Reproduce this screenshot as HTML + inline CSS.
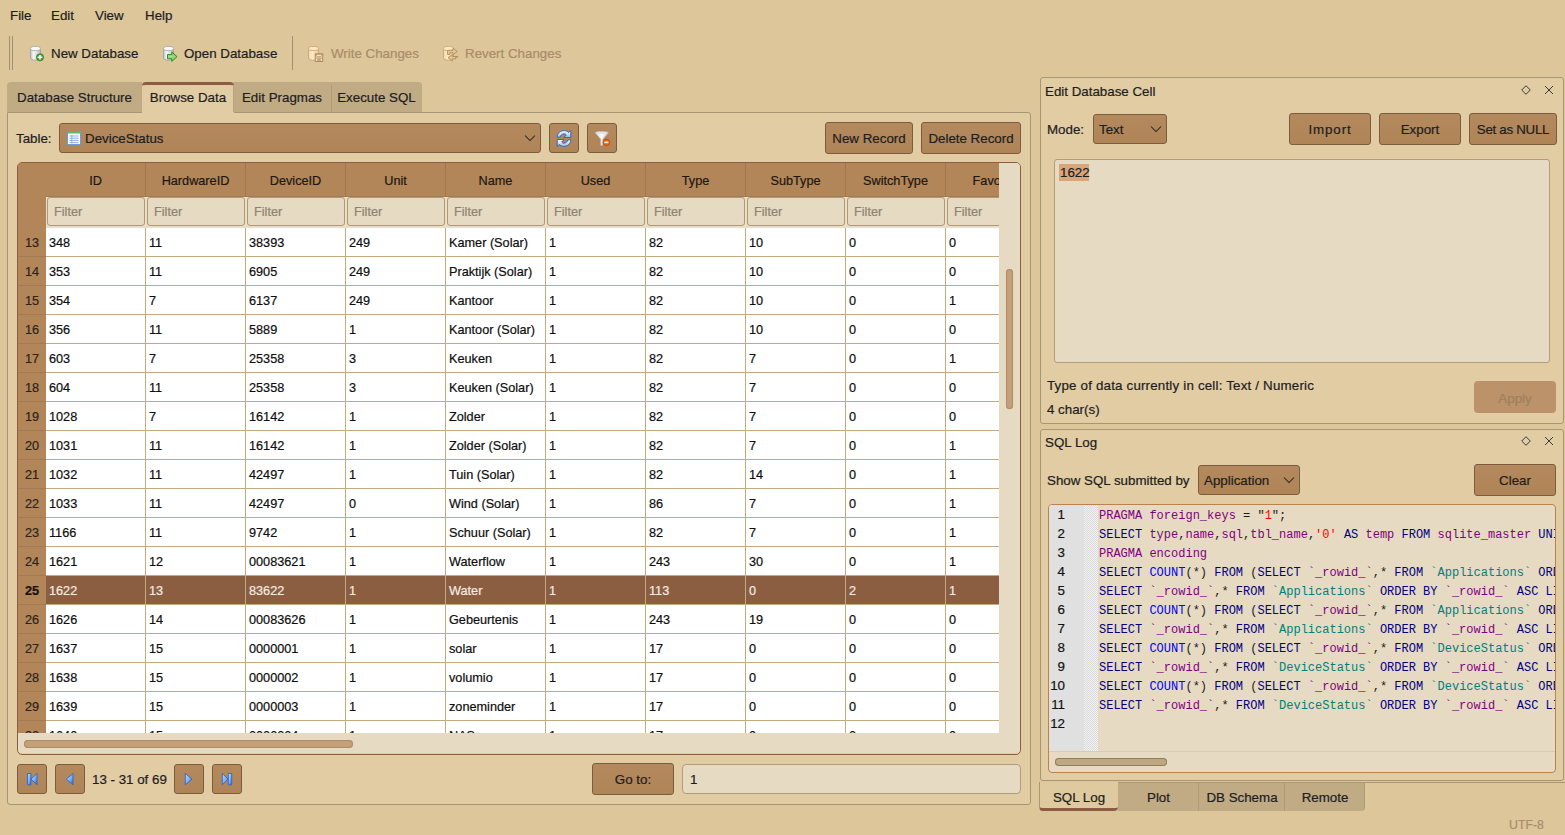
<!DOCTYPE html>
<html><head><meta charset="utf-8"><style>
html,body{margin:0;padding:0}
body{-webkit-text-stroke:0.2px currentColor;width:1565px;height:835px;overflow:hidden;position:relative;background:#dcc69a;font-family:"Liberation Sans",sans-serif;font-size:13.33px;color:#1d1d1d}
.t,.hc,.ft,.rh,.cell,.ln{position:absolute;white-space:nowrap;line-height:16px}
.dis{color:#a98c69}
.ic{position:absolute;line-height:0}
.ic svg{display:block}
.pane{position:absolute;background:#e1cca4;border:1px solid #a79674;border-radius:0 3px 3px 3px;box-sizing:border-box}
.tab{position:absolute;background:#c0ab85;box-sizing:border-box;border-radius:4px 4px 0 0}
.tabsel{position:absolute;background:#e1cca4;box-sizing:border-box;border-top:3px solid #8d5b44;border-radius:4px 4px 0 0}
.btn{position:absolute;box-sizing:border-box;background:linear-gradient(#b4895d,#af8558);border:1px solid #7c5b3e;border-radius:3px}
.frame{position:absolute;box-sizing:border-box;border:1px solid #8f5c45;border-radius:5px}
.hc{text-align:center;font-size:12.7px;color:#1c1712}
.filt{position:absolute;box-sizing:border-box;background:#e6dac2;border:1px solid #b09a74;border-radius:3px}
.ft{font-size:12.7px;color:#8c8272}
.rh{left:0;width:28px;text-align:center;font-size:12.7px;color:#2a231c}
.rhs{font-weight:bold;color:#17110c}
.cell{font-size:12.7px;color:#0d0d0d}
.cs{color:#f4ece3}
.inp{position:absolute;box-sizing:border-box;background:#e6dac2;border:1px solid #b09d7b;border-radius:4px}
.dock{position:absolute;box-sizing:border-box;background:#e1cca4;border:1px solid #a79674;border-radius:3px}
.editor{position:absolute;box-sizing:border-box;background:#e6dac2;border:1px solid #bd8150;border-radius:4px}
.fold{background-color:#f2f2f2;background-image:linear-gradient(45deg,#dadada 25%,transparent 25%,transparent 75%,#dadada 75%),linear-gradient(45deg,#dadada 25%,transparent 25%,transparent 75%,#dadada 75%);background-size:2px 2px;background-position:0 0,1px 1px}
.ln{left:0;width:16px;text-align:right;font-size:13.33px;color:#111}
.code{-webkit-text-stroke:0;position:absolute;left:50px;font-family:"Liberation Mono",monospace;font-size:12px;line-height:16px;white-space:pre}
.btab{position:absolute;top:783px;height:28px;box-sizing:border-box;background:#c0ab85;border-right:1px solid #b09b76;border-radius:0 0 4px 4px}
.bsel{background:#dfc99f;border-bottom:3px solid #8d5b44;border-right:none;border-left:1px solid #a99674;top:782px;height:29px}
</style></head><body>
<div class="t" style="left:10px;top:8px;">File</div>
<div class="t" style="left:51px;top:8px;">Edit</div>
<div class="t" style="left:95px;top:8px;">View</div>
<div class="t" style="left:145px;top:8px;">Help</div>
<div style="position:absolute;left:9px;top:36px;width:1px;height:34px;background:#a39072"></div>
<div style="position:absolute;left:12px;top:36px;width:1px;height:34px;background:#a39072"></div>
<div style="position:absolute;left:292px;top:36px;width:1px;height:34px;background:#a39072"></div>
<div class="ic" style="left:29px;top:45px"><svg width="17" height="17" viewBox="0 0 17 17"><defs><linearGradient id="g1" x1="0" x2="1"><stop offset="0" stop-color="#c4c4c4"/><stop offset=".3" stop-color="#f4f4f4"/><stop offset=".7" stop-color="#d9d9d9"/><stop offset="1" stop-color="#b4b4b4"/></linearGradient></defs>
<path d="M1.5 3.5v9.5c0 1.3 2.3 2.2 5 2.2s5-.9 5-2.2V3.5" fill="url(#g1)" stroke="#a3a3a3" stroke-width=".9"/>
<ellipse cx="6.5" cy="3.5" rx="5" ry="2.1" fill="#fdfdfd" stroke="#a8a8a8" stroke-width=".9"/><circle cx="11" cy="12.3" r="3.6" fill="#4c9f36" stroke="#2f7c20" stroke-width=".7"/><path d="M11 10v4.6M8.7 12.3h4.6" stroke="#fff" stroke-width="1.5"/></svg></div>
<div class="t" style="left:51px;top:46px;">New Database</div>
<div class="ic" style="left:162px;top:45px"><svg width="17" height="17" viewBox="0 0 17 17"><defs><linearGradient id="g2" x1="0" x2="1"><stop offset="0" stop-color="#c4c4c4"/><stop offset=".3" stop-color="#f4f4f4"/><stop offset=".7" stop-color="#d9d9d9"/><stop offset="1" stop-color="#b4b4b4"/></linearGradient></defs>
<path d="M1.5 3.5v9.5c0 1.3 2.3 2.2 5 2.2s5-.9 5-2.2V3.5" fill="url(#g2)" stroke="#a3a3a3" stroke-width=".9"/>
<ellipse cx="6.5" cy="3.5" rx="5" ry="2.1" fill="#fdfdfd" stroke="#a8a8a8" stroke-width=".9"/><path d="M5.5 9.6h4.3V7l5.2 4.7-5.2 4.7v-2.6H5.5z" fill="#93d17a" stroke="#2a8f1b" stroke-width="1" stroke-linejoin="miter"/><path d="M6.5 11.2h4" stroke="#c5ebb5" stroke-width=".8"/></svg></div>
<div class="t" style="left:184px;top:46px;">Open Database</div>
<div class="ic" style="left:307px;top:45px"><svg width="17" height="17" viewBox="0 0 17 17"><defs><linearGradient id="g3" x1="0" x2="1"><stop offset="0" stop-color="#f3d6a8"/><stop offset=".4" stop-color="#ffe9c4"/><stop offset="1" stop-color="#e9c999"/></linearGradient></defs>
<path d="M1.5 3.5v9.5c0 1.3 2.3 2.2 5 2.2s5-.9 5-2.2V3.5" fill="url(#g3)" stroke="#c9a77a" stroke-width=".9"/>
<ellipse cx="6.5" cy="3.5" rx="5" ry="2.1" fill="#ffe7c2" stroke="#c9a77a" stroke-width=".9"/><rect x="8.3" y="8.8" width="7.4" height="7.6" fill="#ffe5bd" stroke="#a9875b" stroke-width="1"/><rect x="9.7" y="9.3" width="4.6" height="2.3" fill="#ffe5bd" stroke="#a9875b" stroke-width=".6"/><rect x="9.3" y="12.6" width="5.4" height="1" fill="#a9875b"/><rect x="10" y="14.4" width="4" height="1.2" fill="#a9875b"/></svg></div>
<div class="t dis" style="left:331px;top:46px;">Write Changes</div>
<div class="ic" style="left:442px;top:45px"><svg width="17" height="17" viewBox="0 0 17 17"><defs><linearGradient id="g4" x1="0" x2="1"><stop offset="0" stop-color="#f3d6a8"/><stop offset=".4" stop-color="#ffe9c4"/><stop offset="1" stop-color="#e9c999"/></linearGradient></defs>
<path d="M1.5 3.5v9.5c0 1.3 2.3 2.2 5 2.2s5-.9 5-2.2V3.5" fill="url(#g4)" stroke="#c9a77a" stroke-width=".9"/>
<ellipse cx="6.5" cy="3.5" rx="5" ry="2.1" fill="#ffe7c2" stroke="#c9a77a" stroke-width=".9"/><path d="M5.5 5.3h5.5V3.3l4.3 3.2-4.3 3.2V7.7H7.8v1.8H5.5z" fill="#e3c596" stroke="#a9875b" stroke-width=".8" stroke-linejoin="round"/><path d="M15.8 11.5h-5.5v-2l-4.3 3.2 4.3 3.2v-2h3.2v-1.6h2.3z" fill="#e3c596" stroke="#a9875b" stroke-width=".8" stroke-linejoin="round"/></svg></div>
<div class="t dis" style="left:465px;top:46px;">Revert Changes</div>
<div class="pane" style="left:7px;top:112px;width:1024px;height:693px"></div>
<div class="tab" style="left:7px;top:82px;width:135px;height:30px;border-radius:4px 0 0 0"></div>
<div class="t" style="left:7px;top:90px;width:135px;text-align:center">Database Structure</div>
<div class="tab" style="left:233px;top:82px;width:98px;height:30px;border-radius:0"></div>
<div class="t" style="left:233px;top:90px;width:98px;text-align:center">Edit Pragmas</div>
<div class="tab" style="left:331px;top:82px;width:91px;height:30px;border-radius:0 4px 0 0"></div>
<div class="t" style="left:331px;top:90px;width:91px;text-align:center">Execute SQL</div>
<div class="tabsel" style="left:142px;top:82px;width:92px;height:32px"></div>
<div style="position:absolute;left:331px;top:85px;width:1px;height:27px;background:#ad9a76"></div>
<div style="position:absolute;left:233px;top:85px;width:1px;height:27px;background:#b8a47f"></div>
<div class="t" style="left:142px;top:90px;width:92px;text-align:center">Browse Data</div>
<div class="t" style="left:16px;top:131px;">Table:</div>
<div class="btn" style="left:59px;top:123px;width:482px;height:30px;"></div>
<div class="ic" style="left:67px;top:131px"><svg width="15" height="15" viewBox="0 0 15 15"><rect x=".5" y=".5" width="13" height="13" fill="#f7fafe" stroke="#6d9ad8"/><rect x="1" y="1" width="12" height="1.5" fill="#62b85a"/><path d="M2.5 5h9M2.5 7.2h9M2.5 9.4h9M2.5 11.6h9" stroke="#8fb3e6" stroke-width="1"/><path d="M4.8 4v8.5" stroke="#8fb3e6" stroke-width="1"/></svg></div>
<div class="t" style="left:85px;top:131px;">DeviceStatus</div>
<div class="ic" style="left:524px;top:134px"><svg width="12" height="8" viewBox="0 0 12 8"><path d="M1 1.5l5 5 5-5" fill="none" stroke="#262626" stroke-width="1.05"/></svg></div>
<div class="btn" style="left:549px;top:123px;width:30px;height:30px;"></div>
<div class="ic" style="left:556px;top:130px"><svg width="16" height="17" viewBox="0 0 16 17"><defs><linearGradient id="rfg" x1="0" y1="0" x2="0" y2="1"><stop offset="0" stop-color="#eef6ff"/><stop offset=".5" stop-color="#cfe3fb"/><stop offset="1" stop-color="#8db9ec"/></linearGradient></defs><path d="M1.2 7.2C1.2 3.2 4.5.6 8.3.6c2 0 3.5.9 4.5 1.9L14.8.5v7H7.8l2.5-2.5c-.6-.8-1.3-1.2-2-1.2-2.1 0-3.9 1.5-4.1 3.4z" fill="url(#rfg)" stroke="#2d68bd" stroke-width="1" stroke-linejoin="round"/><path d="M14.8 9.8c0 4-3.3 6.6-7.1 6.6-2 0-3.5-.9-4.5-1.9l-2 2v-7h7l-2.5 2.5c.6.8 1.3 1.2 2 1.2 2.1 0 3.9-1.5 4.1-3.4z" fill="url(#rfg)" stroke="#2d68bd" stroke-width="1" stroke-linejoin="round"/></svg></div>
<div class="btn" style="left:587px;top:123px;width:30px;height:30px;"></div>
<div class="ic" style="left:594px;top:131px"><svg width="16" height="16" viewBox="0 0 16 16"><defs><linearGradient id="fng" x1="0" x2="1"><stop offset="0" stop-color="#dcdcdc"/><stop offset=".5" stop-color="#fbfbfb"/><stop offset="1" stop-color="#d0d0d0"/></linearGradient></defs><path d="M1.3 1.8C1.3.9 4.3.4 7.8.4s6.5.5 6.5 1.4L8.8 8.3v6H6.8v-6z" fill="url(#fng)" stroke="#bdbdbd" stroke-width=".8" stroke-linejoin="round"/><ellipse cx="7.8" cy="1.9" rx="5.2" ry=".9" fill="#e2e2e2"/><circle cx="12.4" cy="11.4" r="3.4" fill="#e0630f" stroke="#b94a06" stroke-width=".6"/><rect x="10.4" y="10.6" width="4" height="1.6" fill="#fff"/></svg></div>
<div class="btn" style="left:825px;top:122px;width:88px;height:32px;"></div>
<div class="t" style="left:825px;top:131px;width:88px;text-align:center">New Record</div>
<div class="btn" style="left:921px;top:122px;width:100px;height:32px;"></div>
<div class="t" style="left:921px;top:131px;width:100px;text-align:center">Delete Record</div>
<div class="frame" style="left:17px;top:162px;width:1004px;height:593px"></div>
<div style="position:absolute;left:18px;top:163px;width:981px;height:570px;overflow:hidden;border-radius:4px 0 0 0">
<div style="position:absolute;left:0px;top:0px;width:981px;height:34px;background:#b28659"></div>
<div style="position:absolute;left:28px;top:34px;width:953px;height:31px;background:#e9dec8"></div>
<div style="position:absolute;left:0px;top:0px;width:28px;height:570px;background:#b28659"></div>
<div style="position:absolute;left:28px;top:33px;width:953px;height:1px;background:#a57c52"></div>
<div class="hc" style="left:28px;top:10px;width:99px">ID</div>
<div style="position:absolute;left:127px;top:0px;width:1px;height:34px;background:#9f774f"></div>
<div class="filt" style="left:29px;top:34px;width:98px;height:29px"></div>
<div class="ft" style="left:36px;top:41px">Filter</div>
<div class="hc" style="left:128px;top:10px;width:99px">HardwareID</div>
<div style="position:absolute;left:227px;top:0px;width:1px;height:34px;background:#9f774f"></div>
<div class="filt" style="left:129px;top:34px;width:98px;height:29px"></div>
<div class="ft" style="left:136px;top:41px">Filter</div>
<div class="hc" style="left:228px;top:10px;width:99px">DeviceID</div>
<div style="position:absolute;left:327px;top:0px;width:1px;height:34px;background:#9f774f"></div>
<div class="filt" style="left:229px;top:34px;width:98px;height:29px"></div>
<div class="ft" style="left:236px;top:41px">Filter</div>
<div class="hc" style="left:328px;top:10px;width:99px">Unit</div>
<div style="position:absolute;left:427px;top:0px;width:1px;height:34px;background:#9f774f"></div>
<div class="filt" style="left:329px;top:34px;width:98px;height:29px"></div>
<div class="ft" style="left:336px;top:41px">Filter</div>
<div class="hc" style="left:428px;top:10px;width:99px">Name</div>
<div style="position:absolute;left:527px;top:0px;width:1px;height:34px;background:#9f774f"></div>
<div class="filt" style="left:429px;top:34px;width:98px;height:29px"></div>
<div class="ft" style="left:436px;top:41px">Filter</div>
<div class="hc" style="left:528px;top:10px;width:99px">Used</div>
<div style="position:absolute;left:627px;top:0px;width:1px;height:34px;background:#9f774f"></div>
<div class="filt" style="left:529px;top:34px;width:98px;height:29px"></div>
<div class="ft" style="left:536px;top:41px">Filter</div>
<div class="hc" style="left:628px;top:10px;width:99px">Type</div>
<div style="position:absolute;left:727px;top:0px;width:1px;height:34px;background:#9f774f"></div>
<div class="filt" style="left:629px;top:34px;width:98px;height:29px"></div>
<div class="ft" style="left:636px;top:41px">Filter</div>
<div class="hc" style="left:728px;top:10px;width:99px">SubType</div>
<div style="position:absolute;left:827px;top:0px;width:1px;height:34px;background:#9f774f"></div>
<div class="filt" style="left:729px;top:34px;width:98px;height:29px"></div>
<div class="ft" style="left:736px;top:41px">Filter</div>
<div class="hc" style="left:828px;top:10px;width:99px">SwitchType</div>
<div style="position:absolute;left:927px;top:0px;width:1px;height:34px;background:#9f774f"></div>
<div class="filt" style="left:829px;top:34px;width:98px;height:29px"></div>
<div class="ft" style="left:836px;top:41px">Filter</div>
<div class="hc" style="left:928px;top:10px;width:99px">Favorite</div>
<div style="position:absolute;left:1027px;top:0px;width:1px;height:34px;background:#9f774f"></div>
<div class="filt" style="left:929px;top:34px;width:98px;height:29px"></div>
<div class="ft" style="left:936px;top:41px">Filter</div>
<div style="position:absolute;left:28px;top:65px;width:953px;height:28px;background:#fff"></div>
<div style="position:absolute;left:28px;top:93px;width:953px;height:1px;background:#c4aa80"></div>
<div style="position:absolute;left:0px;top:93px;width:28px;height:1px;background:#a27b55"></div>
<div class="rh" style="top:72px">13</div>
<div class="cell" style="left:31px;top:72px">348</div>
<div class="cell" style="left:131px;top:72px">11</div>
<div class="cell" style="left:231px;top:72px">38393</div>
<div class="cell" style="left:331px;top:72px">249</div>
<div class="cell" style="left:431px;top:72px">Kamer (Solar)</div>
<div class="cell" style="left:531px;top:72px">1</div>
<div class="cell" style="left:631px;top:72px">82</div>
<div class="cell" style="left:731px;top:72px">10</div>
<div class="cell" style="left:831px;top:72px">0</div>
<div class="cell" style="left:931px;top:72px">0</div>
<div style="position:absolute;left:28px;top:94px;width:953px;height:28px;background:#fff"></div>
<div style="position:absolute;left:28px;top:122px;width:953px;height:1px;background:#c4aa80"></div>
<div style="position:absolute;left:0px;top:122px;width:28px;height:1px;background:#a27b55"></div>
<div class="rh" style="top:101px">14</div>
<div class="cell" style="left:31px;top:101px">353</div>
<div class="cell" style="left:131px;top:101px">11</div>
<div class="cell" style="left:231px;top:101px">6905</div>
<div class="cell" style="left:331px;top:101px">249</div>
<div class="cell" style="left:431px;top:101px">Praktijk (Solar)</div>
<div class="cell" style="left:531px;top:101px">1</div>
<div class="cell" style="left:631px;top:101px">82</div>
<div class="cell" style="left:731px;top:101px">10</div>
<div class="cell" style="left:831px;top:101px">0</div>
<div class="cell" style="left:931px;top:101px">0</div>
<div style="position:absolute;left:28px;top:123px;width:953px;height:28px;background:#fff"></div>
<div style="position:absolute;left:28px;top:151px;width:953px;height:1px;background:#c4aa80"></div>
<div style="position:absolute;left:0px;top:151px;width:28px;height:1px;background:#a27b55"></div>
<div class="rh" style="top:130px">15</div>
<div class="cell" style="left:31px;top:130px">354</div>
<div class="cell" style="left:131px;top:130px">7</div>
<div class="cell" style="left:231px;top:130px">6137</div>
<div class="cell" style="left:331px;top:130px">249</div>
<div class="cell" style="left:431px;top:130px">Kantoor</div>
<div class="cell" style="left:531px;top:130px">1</div>
<div class="cell" style="left:631px;top:130px">82</div>
<div class="cell" style="left:731px;top:130px">10</div>
<div class="cell" style="left:831px;top:130px">0</div>
<div class="cell" style="left:931px;top:130px">1</div>
<div style="position:absolute;left:28px;top:152px;width:953px;height:28px;background:#fff"></div>
<div style="position:absolute;left:28px;top:180px;width:953px;height:1px;background:#c4aa80"></div>
<div style="position:absolute;left:0px;top:180px;width:28px;height:1px;background:#a27b55"></div>
<div class="rh" style="top:159px">16</div>
<div class="cell" style="left:31px;top:159px">356</div>
<div class="cell" style="left:131px;top:159px">11</div>
<div class="cell" style="left:231px;top:159px">5889</div>
<div class="cell" style="left:331px;top:159px">1</div>
<div class="cell" style="left:431px;top:159px">Kantoor (Solar)</div>
<div class="cell" style="left:531px;top:159px">1</div>
<div class="cell" style="left:631px;top:159px">82</div>
<div class="cell" style="left:731px;top:159px">10</div>
<div class="cell" style="left:831px;top:159px">0</div>
<div class="cell" style="left:931px;top:159px">0</div>
<div style="position:absolute;left:28px;top:181px;width:953px;height:28px;background:#fff"></div>
<div style="position:absolute;left:28px;top:209px;width:953px;height:1px;background:#c4aa80"></div>
<div style="position:absolute;left:0px;top:209px;width:28px;height:1px;background:#a27b55"></div>
<div class="rh" style="top:188px">17</div>
<div class="cell" style="left:31px;top:188px">603</div>
<div class="cell" style="left:131px;top:188px">7</div>
<div class="cell" style="left:231px;top:188px">25358</div>
<div class="cell" style="left:331px;top:188px">3</div>
<div class="cell" style="left:431px;top:188px">Keuken</div>
<div class="cell" style="left:531px;top:188px">1</div>
<div class="cell" style="left:631px;top:188px">82</div>
<div class="cell" style="left:731px;top:188px">7</div>
<div class="cell" style="left:831px;top:188px">0</div>
<div class="cell" style="left:931px;top:188px">1</div>
<div style="position:absolute;left:28px;top:210px;width:953px;height:28px;background:#fff"></div>
<div style="position:absolute;left:28px;top:238px;width:953px;height:1px;background:#c4aa80"></div>
<div style="position:absolute;left:0px;top:238px;width:28px;height:1px;background:#a27b55"></div>
<div class="rh" style="top:217px">18</div>
<div class="cell" style="left:31px;top:217px">604</div>
<div class="cell" style="left:131px;top:217px">11</div>
<div class="cell" style="left:231px;top:217px">25358</div>
<div class="cell" style="left:331px;top:217px">3</div>
<div class="cell" style="left:431px;top:217px">Keuken (Solar)</div>
<div class="cell" style="left:531px;top:217px">1</div>
<div class="cell" style="left:631px;top:217px">82</div>
<div class="cell" style="left:731px;top:217px">7</div>
<div class="cell" style="left:831px;top:217px">0</div>
<div class="cell" style="left:931px;top:217px">0</div>
<div style="position:absolute;left:28px;top:239px;width:953px;height:28px;background:#fff"></div>
<div style="position:absolute;left:28px;top:267px;width:953px;height:1px;background:#c4aa80"></div>
<div style="position:absolute;left:0px;top:267px;width:28px;height:1px;background:#a27b55"></div>
<div class="rh" style="top:246px">19</div>
<div class="cell" style="left:31px;top:246px">1028</div>
<div class="cell" style="left:131px;top:246px">7</div>
<div class="cell" style="left:231px;top:246px">16142</div>
<div class="cell" style="left:331px;top:246px">1</div>
<div class="cell" style="left:431px;top:246px">Zolder</div>
<div class="cell" style="left:531px;top:246px">1</div>
<div class="cell" style="left:631px;top:246px">82</div>
<div class="cell" style="left:731px;top:246px">7</div>
<div class="cell" style="left:831px;top:246px">0</div>
<div class="cell" style="left:931px;top:246px">0</div>
<div style="position:absolute;left:28px;top:268px;width:953px;height:28px;background:#fff"></div>
<div style="position:absolute;left:28px;top:296px;width:953px;height:1px;background:#c4aa80"></div>
<div style="position:absolute;left:0px;top:296px;width:28px;height:1px;background:#a27b55"></div>
<div class="rh" style="top:275px">20</div>
<div class="cell" style="left:31px;top:275px">1031</div>
<div class="cell" style="left:131px;top:275px">11</div>
<div class="cell" style="left:231px;top:275px">16142</div>
<div class="cell" style="left:331px;top:275px">1</div>
<div class="cell" style="left:431px;top:275px">Zolder (Solar)</div>
<div class="cell" style="left:531px;top:275px">1</div>
<div class="cell" style="left:631px;top:275px">82</div>
<div class="cell" style="left:731px;top:275px">7</div>
<div class="cell" style="left:831px;top:275px">0</div>
<div class="cell" style="left:931px;top:275px">1</div>
<div style="position:absolute;left:28px;top:297px;width:953px;height:28px;background:#fff"></div>
<div style="position:absolute;left:28px;top:325px;width:953px;height:1px;background:#c4aa80"></div>
<div style="position:absolute;left:0px;top:325px;width:28px;height:1px;background:#a27b55"></div>
<div class="rh" style="top:304px">21</div>
<div class="cell" style="left:31px;top:304px">1032</div>
<div class="cell" style="left:131px;top:304px">11</div>
<div class="cell" style="left:231px;top:304px">42497</div>
<div class="cell" style="left:331px;top:304px">1</div>
<div class="cell" style="left:431px;top:304px">Tuin (Solar)</div>
<div class="cell" style="left:531px;top:304px">1</div>
<div class="cell" style="left:631px;top:304px">82</div>
<div class="cell" style="left:731px;top:304px">14</div>
<div class="cell" style="left:831px;top:304px">0</div>
<div class="cell" style="left:931px;top:304px">1</div>
<div style="position:absolute;left:28px;top:326px;width:953px;height:28px;background:#fff"></div>
<div style="position:absolute;left:28px;top:354px;width:953px;height:1px;background:#c4aa80"></div>
<div style="position:absolute;left:0px;top:354px;width:28px;height:1px;background:#a27b55"></div>
<div class="rh" style="top:333px">22</div>
<div class="cell" style="left:31px;top:333px">1033</div>
<div class="cell" style="left:131px;top:333px">11</div>
<div class="cell" style="left:231px;top:333px">42497</div>
<div class="cell" style="left:331px;top:333px">0</div>
<div class="cell" style="left:431px;top:333px">Wind (Solar)</div>
<div class="cell" style="left:531px;top:333px">1</div>
<div class="cell" style="left:631px;top:333px">86</div>
<div class="cell" style="left:731px;top:333px">7</div>
<div class="cell" style="left:831px;top:333px">0</div>
<div class="cell" style="left:931px;top:333px">1</div>
<div style="position:absolute;left:28px;top:355px;width:953px;height:28px;background:#fff"></div>
<div style="position:absolute;left:28px;top:383px;width:953px;height:1px;background:#c4aa80"></div>
<div style="position:absolute;left:0px;top:383px;width:28px;height:1px;background:#a27b55"></div>
<div class="rh" style="top:362px">23</div>
<div class="cell" style="left:31px;top:362px">1166</div>
<div class="cell" style="left:131px;top:362px">11</div>
<div class="cell" style="left:231px;top:362px">9742</div>
<div class="cell" style="left:331px;top:362px">1</div>
<div class="cell" style="left:431px;top:362px">Schuur (Solar)</div>
<div class="cell" style="left:531px;top:362px">1</div>
<div class="cell" style="left:631px;top:362px">82</div>
<div class="cell" style="left:731px;top:362px">7</div>
<div class="cell" style="left:831px;top:362px">0</div>
<div class="cell" style="left:931px;top:362px">1</div>
<div style="position:absolute;left:28px;top:384px;width:953px;height:28px;background:#fff"></div>
<div style="position:absolute;left:28px;top:412px;width:953px;height:1px;background:#c4aa80"></div>
<div style="position:absolute;left:0px;top:412px;width:28px;height:1px;background:#a27b55"></div>
<div class="rh" style="top:391px">24</div>
<div class="cell" style="left:31px;top:391px">1621</div>
<div class="cell" style="left:131px;top:391px">12</div>
<div class="cell" style="left:231px;top:391px">00083621</div>
<div class="cell" style="left:331px;top:391px">1</div>
<div class="cell" style="left:431px;top:391px">Waterflow</div>
<div class="cell" style="left:531px;top:391px">1</div>
<div class="cell" style="left:631px;top:391px">243</div>
<div class="cell" style="left:731px;top:391px">30</div>
<div class="cell" style="left:831px;top:391px">0</div>
<div class="cell" style="left:931px;top:391px">1</div>
<div style="position:absolute;left:28px;top:413px;width:953px;height:28px;background:#8b5e42"></div>
<div style="position:absolute;left:28px;top:441px;width:953px;height:1px;background:#c4aa80"></div>
<div style="position:absolute;left:0px;top:441px;width:28px;height:1px;background:#a27b55"></div>
<div class="rh rhs" style="top:420px">25</div>
<div class="cell cs" style="left:31px;top:420px">1622</div>
<div class="cell cs" style="left:131px;top:420px">13</div>
<div class="cell cs" style="left:231px;top:420px">83622</div>
<div class="cell cs" style="left:331px;top:420px">1</div>
<div class="cell cs" style="left:431px;top:420px">Water</div>
<div class="cell cs" style="left:531px;top:420px">1</div>
<div class="cell cs" style="left:631px;top:420px">113</div>
<div class="cell cs" style="left:731px;top:420px">0</div>
<div class="cell cs" style="left:831px;top:420px">2</div>
<div class="cell cs" style="left:931px;top:420px">1</div>
<div style="position:absolute;left:28px;top:442px;width:953px;height:28px;background:#fff"></div>
<div style="position:absolute;left:28px;top:470px;width:953px;height:1px;background:#c4aa80"></div>
<div style="position:absolute;left:0px;top:470px;width:28px;height:1px;background:#a27b55"></div>
<div class="rh" style="top:449px">26</div>
<div class="cell" style="left:31px;top:449px">1626</div>
<div class="cell" style="left:131px;top:449px">14</div>
<div class="cell" style="left:231px;top:449px">00083626</div>
<div class="cell" style="left:331px;top:449px">1</div>
<div class="cell" style="left:431px;top:449px">Gebeurtenis</div>
<div class="cell" style="left:531px;top:449px">1</div>
<div class="cell" style="left:631px;top:449px">243</div>
<div class="cell" style="left:731px;top:449px">19</div>
<div class="cell" style="left:831px;top:449px">0</div>
<div class="cell" style="left:931px;top:449px">0</div>
<div style="position:absolute;left:28px;top:471px;width:953px;height:28px;background:#fff"></div>
<div style="position:absolute;left:28px;top:499px;width:953px;height:1px;background:#c4aa80"></div>
<div style="position:absolute;left:0px;top:499px;width:28px;height:1px;background:#a27b55"></div>
<div class="rh" style="top:478px">27</div>
<div class="cell" style="left:31px;top:478px">1637</div>
<div class="cell" style="left:131px;top:478px">15</div>
<div class="cell" style="left:231px;top:478px">0000001</div>
<div class="cell" style="left:331px;top:478px">1</div>
<div class="cell" style="left:431px;top:478px">solar</div>
<div class="cell" style="left:531px;top:478px">1</div>
<div class="cell" style="left:631px;top:478px">17</div>
<div class="cell" style="left:731px;top:478px">0</div>
<div class="cell" style="left:831px;top:478px">0</div>
<div class="cell" style="left:931px;top:478px">0</div>
<div style="position:absolute;left:28px;top:500px;width:953px;height:28px;background:#fff"></div>
<div style="position:absolute;left:28px;top:528px;width:953px;height:1px;background:#c4aa80"></div>
<div style="position:absolute;left:0px;top:528px;width:28px;height:1px;background:#a27b55"></div>
<div class="rh" style="top:507px">28</div>
<div class="cell" style="left:31px;top:507px">1638</div>
<div class="cell" style="left:131px;top:507px">15</div>
<div class="cell" style="left:231px;top:507px">0000002</div>
<div class="cell" style="left:331px;top:507px">1</div>
<div class="cell" style="left:431px;top:507px">volumio</div>
<div class="cell" style="left:531px;top:507px">1</div>
<div class="cell" style="left:631px;top:507px">17</div>
<div class="cell" style="left:731px;top:507px">0</div>
<div class="cell" style="left:831px;top:507px">0</div>
<div class="cell" style="left:931px;top:507px">0</div>
<div style="position:absolute;left:28px;top:529px;width:953px;height:28px;background:#fff"></div>
<div style="position:absolute;left:28px;top:557px;width:953px;height:1px;background:#c4aa80"></div>
<div style="position:absolute;left:0px;top:557px;width:28px;height:1px;background:#a27b55"></div>
<div class="rh" style="top:536px">29</div>
<div class="cell" style="left:31px;top:536px">1639</div>
<div class="cell" style="left:131px;top:536px">15</div>
<div class="cell" style="left:231px;top:536px">0000003</div>
<div class="cell" style="left:331px;top:536px">1</div>
<div class="cell" style="left:431px;top:536px">zoneminder</div>
<div class="cell" style="left:531px;top:536px">1</div>
<div class="cell" style="left:631px;top:536px">17</div>
<div class="cell" style="left:731px;top:536px">0</div>
<div class="cell" style="left:831px;top:536px">0</div>
<div class="cell" style="left:931px;top:536px">0</div>
<div style="position:absolute;left:28px;top:558px;width:953px;height:28px;background:#fff"></div>
<div style="position:absolute;left:28px;top:586px;width:953px;height:1px;background:#c4aa80"></div>
<div style="position:absolute;left:0px;top:586px;width:28px;height:1px;background:#a27b55"></div>
<div class="rh" style="top:565px">30</div>
<div class="cell" style="left:31px;top:565px">1640</div>
<div class="cell" style="left:131px;top:565px">15</div>
<div class="cell" style="left:231px;top:565px">0000004</div>
<div class="cell" style="left:331px;top:565px">1</div>
<div class="cell" style="left:431px;top:565px">NAS</div>
<div class="cell" style="left:531px;top:565px">1</div>
<div class="cell" style="left:631px;top:565px">17</div>
<div class="cell" style="left:731px;top:565px">0</div>
<div class="cell" style="left:831px;top:565px">0</div>
<div class="cell" style="left:931px;top:565px">0</div>
<div style="position:absolute;left:127px;top:65px;width:1px;height:505px;background:#c4aa80"></div>
<div style="position:absolute;left:227px;top:65px;width:1px;height:505px;background:#c4aa80"></div>
<div style="position:absolute;left:327px;top:65px;width:1px;height:505px;background:#c4aa80"></div>
<div style="position:absolute;left:427px;top:65px;width:1px;height:505px;background:#c4aa80"></div>
<div style="position:absolute;left:527px;top:65px;width:1px;height:505px;background:#c4aa80"></div>
<div style="position:absolute;left:627px;top:65px;width:1px;height:505px;background:#c4aa80"></div>
<div style="position:absolute;left:727px;top:65px;width:1px;height:505px;background:#c4aa80"></div>
<div style="position:absolute;left:827px;top:65px;width:1px;height:505px;background:#c4aa80"></div>
<div style="position:absolute;left:927px;top:65px;width:1px;height:505px;background:#c4aa80"></div>
</div>
<div style="position:absolute;left:999px;top:163px;width:21px;height:570px;background:#e6dac2;border-radius:0 4px 0 0"></div>
<div style="position:absolute;left:1006px;top:269px;width:7px;height:140px;background:#c3a079;border-radius:4px;box-shadow:inset 0 0 0 1px #b18b62"></div>
<div style="position:absolute;left:18px;top:733px;width:1002px;height:20px;background:#e6dac2;border-radius:0 0 4px 4px"></div>
<div style="position:absolute;left:24px;top:740px;width:329px;height:8px;background:#c3a079;border-radius:4px;box-shadow:inset 0 0 0 1px #b18b62"></div>
<div class="btn" style="left:17px;top:764px;width:30px;height:30px;"></div>
<div class="ic" style="left:17px;top:764px"><svg width="30" height="30" viewBox="0 0 30 30"><defs><linearGradient id="nvg" x1="0" y1="0" x2="1" y2="1"><stop offset="0" stop-color="#c3dcfb"/><stop offset=".55" stop-color="#7eb0f0"/><stop offset="1" stop-color="#1f5fd8"/></linearGradient></defs><rect x="10.5" y="9.5" width="3.4" height="11.3" fill="url(#nvg)" stroke="#2a66d6" stroke-width=".9" stroke-linejoin="round"/><path d="M14 15.1L20 9.5v11.3z" fill="url(#nvg)" stroke="#2a66d6" stroke-width=".9" stroke-linejoin="round"/></svg></div>
<div class="btn" style="left:55px;top:764px;width:30px;height:30px;"></div>
<div class="ic" style="left:55px;top:764px"><svg width="30" height="30" viewBox="0 0 30 30"><defs><linearGradient id="nvg" x1="0" y1="0" x2="1" y2="1"><stop offset="0" stop-color="#c3dcfb"/><stop offset=".55" stop-color="#7eb0f0"/><stop offset="1" stop-color="#1f5fd8"/></linearGradient></defs><path d="M11.3 15.1L18 9.5v11.3z" fill="url(#nvg)" stroke="#2a66d6" stroke-width=".9" stroke-linejoin="round"/></svg></div>
<div class="btn" style="left:174px;top:764px;width:30px;height:30px;"></div>
<div class="ic" style="left:174px;top:764px"><svg width="30" height="30" viewBox="0 0 30 30"><defs><linearGradient id="nvg" x1="0" y1="0" x2="1" y2="1"><stop offset="0" stop-color="#c3dcfb"/><stop offset=".55" stop-color="#7eb0f0"/><stop offset="1" stop-color="#1f5fd8"/></linearGradient></defs><path d="M11.3 9.5v11.3L18 15.1z" fill="url(#nvg)" stroke="#2a66d6" stroke-width=".9" stroke-linejoin="round"/></svg></div>
<div class="btn" style="left:212px;top:764px;width:30px;height:30px;"></div>
<div class="ic" style="left:212px;top:764px"><svg width="30" height="30" viewBox="0 0 30 30"><defs><linearGradient id="nvg" x1="0" y1="0" x2="1" y2="1"><stop offset="0" stop-color="#c3dcfb"/><stop offset=".55" stop-color="#7eb0f0"/><stop offset="1" stop-color="#1f5fd8"/></linearGradient></defs><path d="M10.3 9.5v11.3L16 15.1z" fill="url(#nvg)" stroke="#2a66d6" stroke-width=".9" stroke-linejoin="round"/><rect x="16.3" y="9.5" width="3.4" height="11.3" fill="url(#nvg)" stroke="#2a66d6" stroke-width=".9" stroke-linejoin="round"/></svg></div>
<div class="t" style="left:92px;top:772px;">13 - 31 of 69</div>
<div class="btn" style="left:592px;top:763px;width:82px;height:32px;"></div>
<div class="t" style="left:592px;top:772px;width:82px;text-align:center">Go to:</div>
<div class="inp" style="left:682px;top:764px;width:339px;height:30px"></div>
<div class="t" style="left:690px;top:772px;">1</div>
<div class="dock" style="left:1040px;top:77px;width:524px;height:347px"></div>
<div class="t" style="left:1045px;top:84px;">Edit Database Cell</div>
<div class="ic" style="left:1521px;top:85px"><svg width="10" height="10" viewBox="0 0 10 10"><path d="M5 .7L9.3 5 5 9.3.7 5z" fill="none" stroke="#3a3a3a" stroke-width="1"/></svg></div>
<div class="ic" style="left:1544px;top:85px"><svg width="10" height="10" viewBox="0 0 10 10"><path d="M1 1l8 8M9 1l-8 8" fill="none" stroke="#3a3a3a" stroke-width="1"/></svg></div>
<div class="t" style="left:1047px;top:122px;">Mode:</div>
<div class="btn" style="left:1093px;top:114px;width:74px;height:30px;"></div>
<div class="t" style="left:1099px;top:122px;">Text</div>
<div class="ic" style="left:1150px;top:125px"><svg width="12" height="8" viewBox="0 0 12 8"><path d="M1 1.5l5 5 5-5" fill="none" stroke="#262626" stroke-width="1.05"/></svg></div>
<div class="btn" style="left:1289px;top:113px;width:82px;height:32px;"></div>
<div class="t" style="left:1289px;top:122px;width:82px;text-align:center;letter-spacing:0.9px">Import</div>
<div class="btn" style="left:1379px;top:113px;width:82px;height:32px;"></div>
<div class="t" style="left:1379px;top:122px;width:82px;text-align:center">Export</div>
<div class="btn" style="left:1469px;top:113px;width:88px;height:32px;"></div>
<div class="t" style="left:1469px;top:122px;width:88px;text-align:center;letter-spacing:-0.3px">Set as NULL</div>
<div class="inp" style="left:1054px;top:159px;width:496px;height:204px;border-radius:3px"></div>
<div style="position:absolute;left:1059px;top:164px;width:30px;height:17px;background:#dba57c"></div>
<div class="t" style="left:1060px;top:165px;">1622</div>
<div class="t" style="left:1047px;top:378px;letter-spacing:0.19px">Type of data currently in cell: Text / Numeric</div>
<div class="t" style="left:1047px;top:402px;">4 char(s)</div>
<div style="position:absolute;left:1474px;top:381px;width:82px;height:32px;background:#bb926a;border-radius:4px"></div>
<div class="t" style="left:1474px;top:391px;width:82px;text-align:center;color:#a07f5c">Apply</div>
<div class="dock" style="left:1040px;top:429px;width:524px;height:352px"></div>
<div class="t" style="left:1045px;top:435px;">SQL Log</div>
<div class="ic" style="left:1521px;top:436px"><svg width="10" height="10" viewBox="0 0 10 10"><path d="M5 .7L9.3 5 5 9.3.7 5z" fill="none" stroke="#3a3a3a" stroke-width="1"/></svg></div>
<div class="ic" style="left:1544px;top:436px"><svg width="10" height="10" viewBox="0 0 10 10"><path d="M1 1l8 8M9 1l-8 8" fill="none" stroke="#3a3a3a" stroke-width="1"/></svg></div>
<div class="t" style="left:1047px;top:473px;">Show SQL submitted by</div>
<div class="btn" style="left:1198px;top:465px;width:102px;height:30px;"></div>
<div class="t" style="left:1204px;top:473px;">Application</div>
<div class="ic" style="left:1283px;top:476px"><svg width="12" height="8" viewBox="0 0 12 8"><path d="M1 1.5l5 5 5-5" fill="none" stroke="#262626" stroke-width="1.05"/></svg></div>
<div class="btn" style="left:1474px;top:464px;width:82px;height:32px;"></div>
<div class="t" style="left:1474px;top:473px;width:82px;text-align:center">Clear</div>
<div class="editor" style="left:1048px;top:504px;width:508px;height:269px"></div>
<div style="position:absolute;left:1049px;top:505px;width:35px;height:246px;background:#e0e0e0;border-radius:3px 0 0 0"></div>
<div class="fold" style="position:absolute;left:1084px;top:505px;width:14px;height:246px"></div>
<div style="position:absolute;left:1049px;top:505px;width:506px;height:246px;overflow:hidden">
<div class="ln" style="top:2px">1</div>
<div class="code" style="top:3px"><span style="color:#7f007f">PRAGMA</span> <span style="color:#7f007f">foreign_keys</span> <span style="color:#1a1a1a">=</span> <span style="color:#1a1a1a">"</span><span style="color:#ff0000">1</span><span style="color:#1a1a1a">"</span><span style="color:#1a1a1a">;</span></div>
<div class="ln" style="top:21px">2</div>
<div class="code" style="top:22px"><span style="color:#00007f">SELECT</span> <span style="color:#7f007f">type</span><span style="color:#1a1a1a">,</span><span style="color:#7f007f">name</span><span style="color:#1a1a1a">,</span><span style="color:#7f007f">sql</span><span style="color:#1a1a1a">,</span><span style="color:#7f007f">tbl_name</span><span style="color:#1a1a1a">,</span><span style="color:#ff0000">'0'</span> <span style="color:#00007f">AS</span> <span style="color:#7f007f">temp</span> <span style="color:#00007f">FROM</span> <span style="color:#7f007f">sqlite_master</span> <span style="color:#00007f">UNION</span></div>
<div class="ln" style="top:40px">3</div>
<div class="code" style="top:41px"><span style="color:#7f007f">PRAGMA</span> <span style="color:#7f007f">encoding</span></div>
<div class="ln" style="top:59px">4</div>
<div class="code" style="top:60px"><span style="color:#00007f">SELECT</span> <span style="color:#0000ff">COUNT</span><span style="color:#1a1a1a">(*)</span> <span style="color:#00007f">FROM</span> <span style="color:#1a1a1a">(</span><span style="color:#00007f">SELECT</span> <span style="color:#7f007f">`_rowid_`</span><span style="color:#1a1a1a">,*</span> <span style="color:#00007f">FROM</span> <span style="color:#007f7f">`Applications`</span> <span style="color:#00007f">ORDER</span></div>
<div class="ln" style="top:78px">5</div>
<div class="code" style="top:79px"><span style="color:#00007f">SELECT</span> <span style="color:#7f007f">`_rowid_`</span><span style="color:#1a1a1a">,*</span> <span style="color:#00007f">FROM</span> <span style="color:#007f7f">`Applications`</span> <span style="color:#00007f">ORDER</span> <span style="color:#00007f">BY</span> <span style="color:#7f007f">`_rowid_`</span> <span style="color:#00007f">ASC</span> <span style="color:#00007f">LIMIT</span></div>
<div class="ln" style="top:97px">6</div>
<div class="code" style="top:98px"><span style="color:#00007f">SELECT</span> <span style="color:#0000ff">COUNT</span><span style="color:#1a1a1a">(*)</span> <span style="color:#00007f">FROM</span> <span style="color:#1a1a1a">(</span><span style="color:#00007f">SELECT</span> <span style="color:#7f007f">`_rowid_`</span><span style="color:#1a1a1a">,*</span> <span style="color:#00007f">FROM</span> <span style="color:#007f7f">`Applications`</span> <span style="color:#00007f">ORDER</span></div>
<div class="ln" style="top:116px">7</div>
<div class="code" style="top:117px"><span style="color:#00007f">SELECT</span> <span style="color:#7f007f">`_rowid_`</span><span style="color:#1a1a1a">,*</span> <span style="color:#00007f">FROM</span> <span style="color:#007f7f">`Applications`</span> <span style="color:#00007f">ORDER</span> <span style="color:#00007f">BY</span> <span style="color:#7f007f">`_rowid_`</span> <span style="color:#00007f">ASC</span> <span style="color:#00007f">LIMIT</span></div>
<div class="ln" style="top:135px">8</div>
<div class="code" style="top:136px"><span style="color:#00007f">SELECT</span> <span style="color:#0000ff">COUNT</span><span style="color:#1a1a1a">(*)</span> <span style="color:#00007f">FROM</span> <span style="color:#1a1a1a">(</span><span style="color:#00007f">SELECT</span> <span style="color:#7f007f">`_rowid_`</span><span style="color:#1a1a1a">,*</span> <span style="color:#00007f">FROM</span> <span style="color:#007f7f">`DeviceStatus`</span> <span style="color:#00007f">ORDER</span></div>
<div class="ln" style="top:154px">9</div>
<div class="code" style="top:155px"><span style="color:#00007f">SELECT</span> <span style="color:#7f007f">`_rowid_`</span><span style="color:#1a1a1a">,*</span> <span style="color:#00007f">FROM</span> <span style="color:#007f7f">`DeviceStatus`</span> <span style="color:#00007f">ORDER</span> <span style="color:#00007f">BY</span> <span style="color:#7f007f">`_rowid_`</span> <span style="color:#00007f">ASC</span> <span style="color:#00007f">LIMIT</span></div>
<div class="ln" style="top:173px">10</div>
<div class="code" style="top:174px"><span style="color:#00007f">SELECT</span> <span style="color:#0000ff">COUNT</span><span style="color:#1a1a1a">(*)</span> <span style="color:#00007f">FROM</span> <span style="color:#1a1a1a">(</span><span style="color:#00007f">SELECT</span> <span style="color:#7f007f">`_rowid_`</span><span style="color:#1a1a1a">,*</span> <span style="color:#00007f">FROM</span> <span style="color:#007f7f">`DeviceStatus`</span> <span style="color:#00007f">ORDER</span></div>
<div class="ln" style="top:192px">11</div>
<div class="code" style="top:193px"><span style="color:#00007f">SELECT</span> <span style="color:#7f007f">`_rowid_`</span><span style="color:#1a1a1a">,*</span> <span style="color:#00007f">FROM</span> <span style="color:#007f7f">`DeviceStatus`</span> <span style="color:#00007f">ORDER</span> <span style="color:#00007f">BY</span> <span style="color:#7f007f">`_rowid_`</span> <span style="color:#00007f">ASC</span> <span style="color:#00007f">LIMIT</span></div>
<div class="ln" style="top:211px">12</div>
<div class="code" style="top:212px"></div>
</div>
<div style="position:absolute;left:1049px;top:751px;width:506px;height:1px;background:#d9ccb2"></div>
<div style="position:absolute;left:1055px;top:758px;width:112px;height:8px;background:#bea781;border-radius:4px;box-shadow:inset 0 0 0 1px #8f7f62"></div>
<div style="position:absolute;left:1039px;top:782px;width:526px;height:1px;background:#a99674"></div>
<div class="btab" style="left:1118px;width:81px;border-radius:0"></div>
<div class="t" style="left:1118px;top:790px;width:81px;text-align:center">Plot</div>
<div class="btab" style="left:1199px;width:86px;border-radius:0"></div>
<div class="t" style="left:1199px;top:790px;width:86px;text-align:center">DB Schema</div>
<div class="btab" style="left:1285px;width:80px;border-radius:0 0 4px 0"></div>
<div class="t" style="left:1285px;top:790px;width:80px;text-align:center">Remote</div>
<div class="btab bsel" style="left:1039px;width:79px"></div>
<div class="t" style="left:1039px;top:790px;width:80px;text-align:center">SQL Log</div>
<div class="t" style="left:1509px;top:817px;color:#ab8d6b;font-size:12.3px">UTF-8</div>
</body></html>
